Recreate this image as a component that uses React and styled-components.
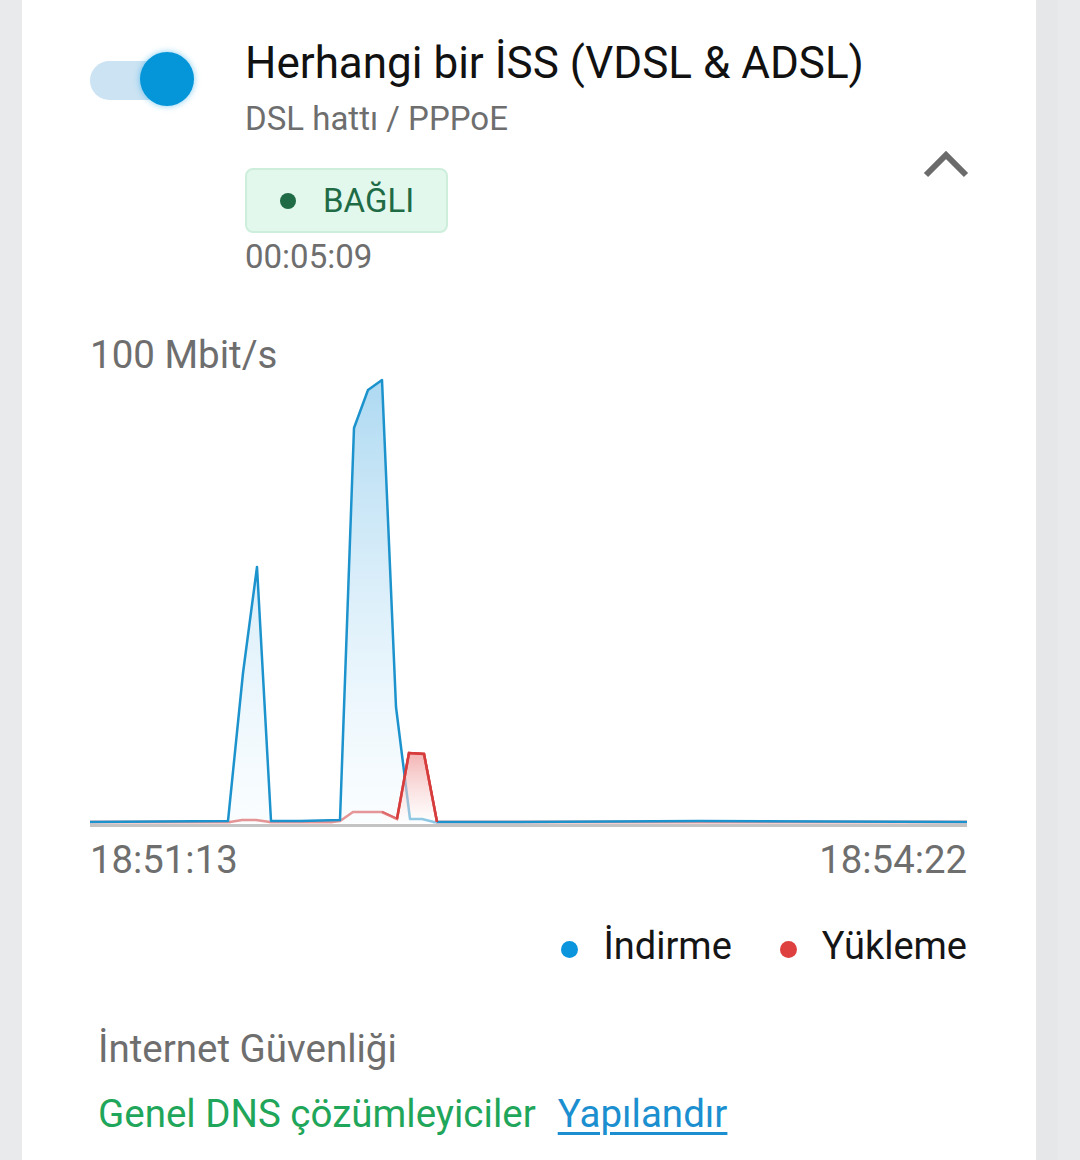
import React from "react";
import styled, { createGlobalStyle } from "styled-components";

const GlobalStyle = createGlobalStyle`
  body {
    margin: 0;
    background: #e9eaec;
    font-family: Roboto, "Noto Sans", sans-serif;
  }
`;

// chart data, in page pixels (x from 90, y from 378)
const download = [
  [90, 822], [228, 821], [243, 673], [257, 567], [271, 821], [300, 821],
  [340, 820], [354, 428], [368, 390], [382, 380], [396, 707], [410, 819],
  [422, 819], [434, 822], [520, 822], [700, 821], [967, 822],
];
const upload = [
  [90, 822], [230, 822], [242, 820], [256, 820], [270, 822], [332, 822],
  [340, 821], [353, 812], [382, 812], [397, 819], [409, 753], [424, 754],
  [437, 822], [967, 822],
];

const OX = 90;
const OY = 378;
const toLine = (pts) => pts.map(([x, y]) => `${x - OX},${y - OY}`).join(" ");
const toArea = (pts) =>
  `${toLine(pts)} ${pts[pts.length - 1][0] - OX},${823 - OY} ${pts[0][0] - OX},${823 - OY}`;

const App = () => {
  return (
    <Page>
      <GlobalStyle />
      <Card>
        <Header>
          <ToggleCell>
            <Track />
            <Thumb />
          </ToggleCell>
          <Info>
            <Title>Herhangi bir İSS (VDSL &amp; ADSL)</Title>
            <Subtitle>DSL hattı / PPPoE</Subtitle>
            <Badge>
              <StatusDot />
              BAĞLI
            </Badge>
            <Uptime>00:05:09</Uptime>
          </Info>
          <Chevron width="52" height="40" viewBox="0 0 52 40">
            <polyline
              points="6,30 26,10 46,30"
              fill="none"
              stroke="#6b6b6b"
              strokeWidth="6"
            />
          </Chevron>
        </Header>

        <Scale>100 Mbit/s</Scale>
        <Chart width="877" height="450" viewBox="0 0 877 450">
          <defs>
            <linearGradient id="dl" x1="0" y1="0" x2="0" y2="1">
              <stop offset="0%" stopColor="#a9d7f1" stopOpacity="0.95" />
              <stop offset="100%" stopColor="#f4fbff" stopOpacity="0.45" />
            </linearGradient>
            <linearGradient id="ul" x1="0" y1="0" x2="0" y2="1">
              <stop offset="0%" stopColor="#f09a9a" stopOpacity="0.75" />
              <stop offset="100%" stopColor="#ffffff" stopOpacity="0.5" />
            </linearGradient>
          </defs>
          <rect x="0" y={824 - OY} width="877" height="3" fill="#c3c3c3" />
          <polyline points={toLine(upload)} fill="none" stroke="#d9403f" strokeWidth="2.5" />
          <polygon points={toArea(download)} fill="url(#dl)" />
          <polyline
            points={toLine(download)}
            fill="none"
            stroke="#1c93cd"
            strokeWidth="2.5"
            strokeLinejoin="round"
          />
          <polygon points={toArea(upload.slice(8, 13))} fill="url(#ul)" />
          <polyline
            points={toLine(upload.slice(8, 13))}
            fill="none"
            stroke="#d9403f"
            strokeWidth="2.5"
            opacity="0.6"
          />
          <polyline
            points={toLine(upload.slice(9, 13))}
            fill="none"
            stroke="#d63c3b"
            strokeWidth="2.5"
          />
        </Chart>
        <AxisLabels>
          <span>18:51:13</span>
          <span>18:54:22</span>
        </AxisLabels>

        <Legend>
          <LegendItem>
            <LegendDot color="#0b95dc" />
            İndirme
          </LegendItem>
          <LegendItem>
            <LegendDot color="#de3f3f" />
            Yükleme
          </LegendItem>
        </Legend>

        <Section>
          <SectionTitle>İnternet Güvenliği</SectionTitle>
          <DnsRow>
            <DnsValue>Genel DNS çözümleyiciler</DnsValue>
            <ConfigLink href="#">Yapılandır</ConfigLink>
          </DnsRow>
        </Section>
      </Card>
      <Gutter />
    </Page>
  );
};

const Page = styled.div`
  display: flex;
  min-height: 1160px;
  padding-left: 22px;
`;

const Card = styled.div`
  width: 1014px;
  min-height: 1160px;
  box-sizing: border-box;
  background: #ffffff;
  padding: 37px 69px 0 68px;
`;

const Gutter = styled.div`
  width: 22px;
  background: #e6e7e9;
`;

const Header = styled.div`
  display: flex;
  align-items: flex-start;
`;

const ToggleCell = styled.div`
  width: 155px;
  flex-shrink: 0;
  display: flex;
  align-items: flex-start;
  padding-top: 15px;
`;

const Track = styled.div`
  width: 100px;
  height: 39px;
  margin-top: 9px;
  border-radius: 20px;
  background: #cbe3f3;
`;

const Thumb = styled.div`
  width: 54px;
  height: 54px;
  margin-left: -50px;
  border-radius: 50%;
  background: #0496d9;
  box-shadow: 0 0 6px rgba(20, 160, 230, 0.55);
`;

const Info = styled.div`
  flex: 1;
  display: flex;
  flex-direction: column;
  align-items: flex-start;
`;

const Title = styled.div`
  font-size: 44px;
  line-height: 52px;
  color: #111111;
`;

const Subtitle = styled.div`
  margin-top: 10px;
  font-size: 33px;
  line-height: 40px;
  color: #6e6e6e;
`;

const Badge = styled.div`
  margin-top: 29px;
  width: 203px;
  height: 65px;
  box-sizing: border-box;
  display: flex;
  align-items: center;
  gap: 27px;
  padding-left: 33px;
  border: 2px solid #cdeedb;
  border-radius: 8px;
  background: #e3f8ec;
  color: #1f6b46;
  font-size: 33px;
  line-height: 40px;
`;

const StatusDot = styled.span`
  width: 16px;
  height: 16px;
  border-radius: 50%;
  background: #1f6b46;
`;

const Uptime = styled.div`
  margin-top: 4px;
  font-size: 33px;
  line-height: 40px;
  color: #6e6e6e;
`;

const Chevron = styled.svg`
  display: block;
  margin-top: 108px;
  margin-right: -5px;
`;

const Scale = styled.div`
  margin-top: 55px;
  font-size: 38.5px;
  line-height: 46px;
  color: #6e6e6e;
`;

const Chart = styled.svg`
  display: block;
`;

const AxisLabels = styled.div`
  margin-top: 9px;
  display: flex;
  justify-content: space-between;
  font-size: 38.3px;
  line-height: 46px;
  color: #6e6e6e;
`;

const Legend = styled.div`
  margin-top: 40px;
  display: flex;
  justify-content: flex-end;
  gap: 48px;
  font-size: 38px;
  line-height: 46px;
  color: #151515;
`;

const LegendItem = styled.div`
  display: flex;
  align-items: center;
  gap: 25px;
`;

const LegendDot = styled.span`
  width: 17px;
  height: 17px;
  margin-top: 7px;
  border-radius: 50%;
  background: ${(p) => p.color};
`;

const Section = styled.div`
  margin-top: 57px;
  padding-left: 8px;
`;

const SectionTitle = styled.div`
  font-size: 38.5px;
  line-height: 46px;
  color: #6e6e6e;
`;

const DnsRow = styled.div`
  margin-top: 19px;
  display: flex;
  gap: 22px;
  font-size: 38.5px;
  line-height: 46px;
`;

const DnsValue = styled.span`
  color: #1fa65a;
`;

const ConfigLink = styled.a`
  color: #1b8fcf;
  text-decoration: underline;
  text-decoration-thickness: 3px;
  text-underline-offset: 5px;
`;

export default App;
